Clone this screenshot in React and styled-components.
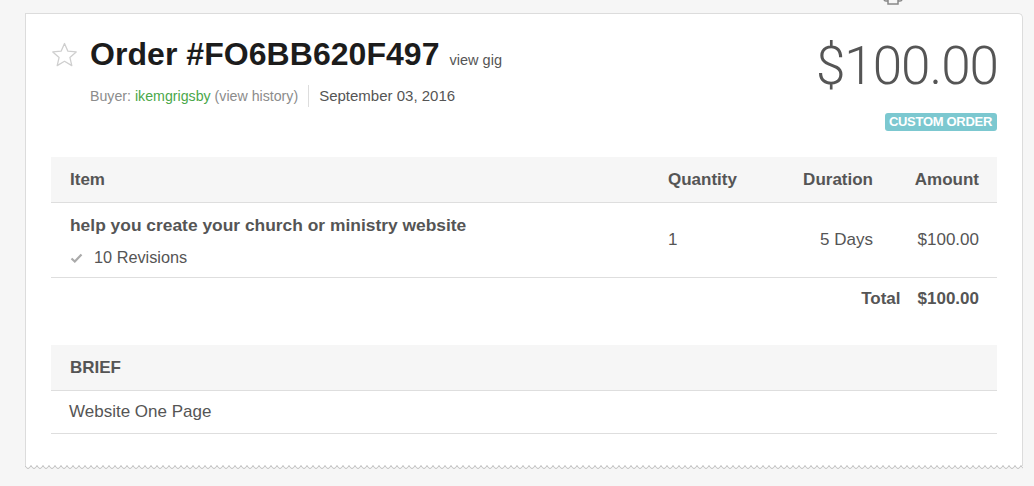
import React from "react";
import styled, { createGlobalStyle } from "styled-components";

const GlobalStyle = createGlobalStyle`
  html, body {
    margin: 0;
    padding: 0;
    background: #f6f6f6;
    font-family: "Liberation Sans", Arial, sans-serif;
    color: #555;
  }
`;

const Page = styled.div`
  width: 1034px;
  height: 486px;
  overflow: hidden;
  padding-left: 25px;
  box-sizing: border-box;
`;

const TopBar = styled.div`
  height: 13px;
  width: 998px;
  overflow: hidden;
  display: flex;
  justify-content: flex-end;
  padding-right: 120px;
  box-sizing: border-box;

  svg {
    margin-top: -13px;
  }
`;

const Card = styled.div`
  position: relative;
  width: 998px;
  box-sizing: border-box;
  background: #fff;
  border: 1px solid #dcdcdc;
  border-bottom: none;
  border-radius: 0 5px 0 0;
  padding: 20px 25px 29px;
`;

const Header = styled.div`
  display: flex;
  justify-content: space-between;
  align-items: flex-start;
`;

const TitleBlock = styled.div`
  display: flex;
  gap: 12px;
`;

const StarIcon = styled.svg`
  margin-top: 8px;
  flex-shrink: 0;
`;

const TitleLine = styled.div`
  display: flex;
  align-items: baseline;
  gap: 10px;
  height: 40px;
`;

const Title = styled.h1`
  margin: 0;
  font-size: 32px;
  line-height: 40px;
  font-weight: 700;
  color: #1c1c1c;
  letter-spacing: 0.05px;
`;

const SmallLink = styled.a`
  font-size: 14.5px;
  color: #555;
  text-decoration: none;
`;

const Meta = styled.div`
  display: flex;
  align-items: center;
  margin-top: 11px;
  font-size: 14.2px;
  line-height: 20px;
  color: #999;
`;

const MetaPart = styled.span`
  color: ${({ $tone }) =>
    $tone === "green" ? "#4aa84a" : $tone === "dark" ? "#555" : "#8c8c8c"};
  font-size: ${({ $tone }) => ($tone === "dark" ? "15px" : "inherit")};
`;

const Divider = styled.span`
  width: 1px;
  height: 22px;
  background: #ddd;
  margin: 0 10px;
`;

const PriceBlock = styled.div`
  display: flex;
  flex-direction: column;
  align-items: flex-end;
`;

const Price = styled.div`
  font-family: Roboto, "Liberation Sans", sans-serif;
  font-weight: 300;
  font-size: 53px;
  line-height: 64px;
  color: #555;
  letter-spacing: -1px;
  margin-right: -1px;
`;

const Badge = styled.span`
  margin-top: 15px;
  background: #7cc8d0;
  color: #fff;
  font-size: 13px;
  font-weight: 700;
  line-height: 18px;
  padding: 0 5px 0 4px;
  border-radius: 3px;
  letter-spacing: -0.3px;
`;

const Table = styled.div`
  margin-top: 26px;
`;

const Row = styled.div`
  display: grid;
  grid-template-columns: 598px 106px 136px 106px;
  align-items: center;
  background: ${({ $head }) => ($head ? "#f6f6f6" : "#fff")};
  border-bottom: 1px solid #dedede;
  min-height: ${({ $head }) => ($head ? "45px" : "74px")};
  font-size: 17px;
  font-weight: ${({ $head }) => ($head ? 700 : 400)};
`;

const Cell = styled.div`
  padding: 0 18px 0 19px;
  text-align: ${({ $right }) => ($right ? "right" : "left")};
`;

const ItemName = styled.div`
  font-weight: 700;
  font-size: 17.4px;
  margin-top: 2px;
`;

const Feature = styled.div`
  display: flex;
  align-items: center;
  gap: 11px;
  margin-top: 12px;
  font-size: 16.3px;
`;

const TotalRow = styled.div`
  display: flex;
  justify-content: flex-end;
  gap: 17px;
  padding: 11px 18px 0 0;
  height: 32px;
  font-size: 17px;
  font-weight: 700;
`;

const Brief = styled.div`
  margin-top: 24px;
`;

const BriefHead = styled.div`
  background: #f6f6f6;
  border-bottom: 1px solid #dedede;
  height: 45px;
  line-height: 45px;
  padding-left: 19px;
  font-size: 17px;
  font-weight: 700;
`;

const BriefBody = styled.div`
  border-bottom: 1px solid #dedede;
  height: 42px;
  line-height: 42px;
  padding-left: 18px;
  font-size: 17px;
`;

const Zigzag = styled.svg`
  display: block;
  width: 998px;
  height: 9px;
`;

function PrintIcon() {
  return (
    <svg width="20" height="18" viewBox="0 0 20 18" fill="none" stroke="#888" strokeWidth="1.5">
      <rect x="5" y="1" width="10" height="5" />
      <rect x="1" y="6" width="18" height="8" rx="2" />
      <rect x="5" y="11" width="10" height="6" fill="#f6f6f6" />
    </svg>
  );
}

function Star() {
  return (
    <StarIcon width="27" height="26" viewBox="0 0 27 26">
      <polygon
        points="13.5,1.5 16.9,9.2 25.2,9.9 18.9,15.4 20.8,23.6 13.5,19.3 6.2,23.6 8.1,15.4 1.8,9.9 10.1,9.2"
        fill="none"
        stroke="#cfcfcf"
        strokeWidth="1.3"
        strokeLinejoin="round"
      />
    </StarIcon>
  );
}

function Check() {
  return (
    <svg width="13" height="10" viewBox="0 0 13 10">
      <polyline points="1.5,5.5 4.8,8.5 11.5,1.5" fill="none" stroke="#aaa" strokeWidth="2.2" />
    </svg>
  );
}

function WaveEdge() {
  let d = "M0,2.5";
  for (let x = 0; x < 998; x += 6) {
    d += ` Q${x + 3},8.5 ${x + 6},2.5`;
  }
  return (
    <Zigzag viewBox="0 0 998 9">
      <path d={`${d} L998,0 L0,0 Z`} fill="#fff" />
      <path d={d} fill="none" stroke="#bdbdbd" strokeWidth="1" />
      <line x1="0.5" y1="0" x2="0.5" y2="3" stroke="#dcdcdc" />
      <line x1="997.5" y1="0" x2="997.5" y2="3" stroke="#dcdcdc" />
    </Zigzag>
  );
}

export default function App() {
  return (
    <>
      <GlobalStyle />
      <Page>
        <TopBar>
          <PrintIcon />
        </TopBar>
        <Card>
          <Header>
            <TitleBlock>
              <Star />
              <div>
                <TitleLine>
                  <Title>Order #FO6BB620F497</Title>
                  <SmallLink>view gig</SmallLink>
                </TitleLine>
                <Meta>
                  <MetaPart>Buyer:&nbsp;</MetaPart>
                  <MetaPart $tone="green">ikemgrigsby</MetaPart>
                  <MetaPart>&nbsp;(view history)</MetaPart>
                  <Divider />
                  <MetaPart $tone="dark">September 03, 2016</MetaPart>
                </Meta>
              </div>
            </TitleBlock>
            <PriceBlock>
              <Price>$100.00</Price>
              <Badge>CUSTOM ORDER</Badge>
            </PriceBlock>
          </Header>

          <Table>
            <Row $head>
              <Cell>Item</Cell>
              <Cell>Quantity</Cell>
              <Cell $right>Duration</Cell>
              <Cell $right>Amount</Cell>
            </Row>
            <Row>
              <Cell>
                <ItemName>help you create your church or ministry website</ItemName>
                <Feature>
                  <Check />
                  10 Revisions
                </Feature>
              </Cell>
              <Cell>1</Cell>
              <Cell $right>5 Days</Cell>
              <Cell $right>$100.00</Cell>
            </Row>
            <TotalRow>
              <span>Total</span>
              <span>$100.00</span>
            </TotalRow>
          </Table>

          <Brief>
            <BriefHead>BRIEF</BriefHead>
            <BriefBody>Website One Page</BriefBody>
          </Brief>
        </Card>
        <WaveEdge />
      </Page>
    </>
  );
}
